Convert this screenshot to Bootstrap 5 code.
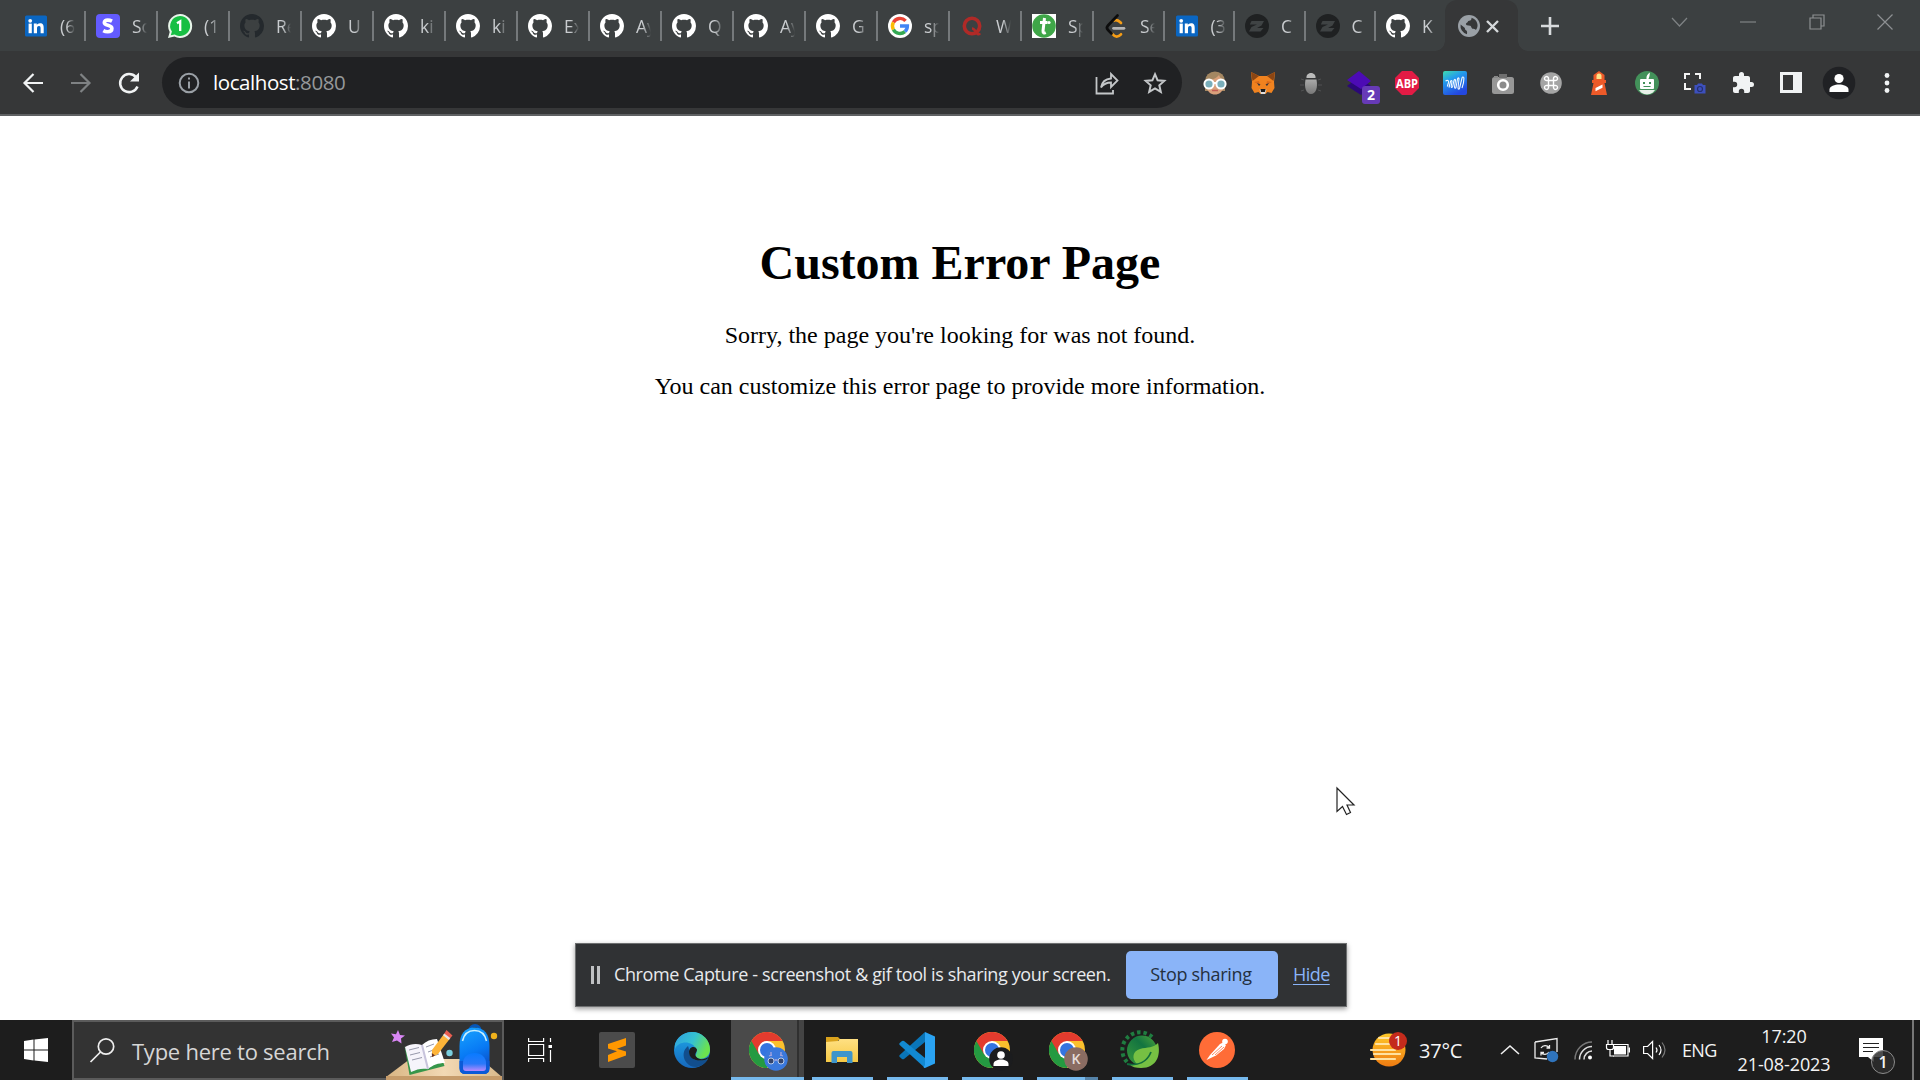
<!DOCTYPE html>
<html lang="en">
<head>
<meta charset="utf-8">
<meta name="viewport" content="width=device-width, initial-scale=1">
<title>Custom Error Page</title>
<link href="https://cdn.jsdelivr.net/npm/bootstrap@5.3.0/dist/css/bootstrap.min.css" rel="stylesheet">
<style>
  body { font-family: "Open Sans", "Noto Sans", sans-serif; background: #fff; }
  svg { display: block; flex: none; overflow: visible; }
  .tabstrip { height: 51px; background: #3c4041; color: #c9cccf; }
  .tab-item { width: 72px; height: 30px; margin-top: 11px; padding-left: 10px; gap: 12px; border-right: 2px solid #75797b; flex: none; }
  .tab-item.first { width: 86px; padding-left: 24px; }
  .tab-item.slim { width: 70.5px; }
  .tab-item.last { border-color: transparent; width: 68.5px; }
  .tab-label { width: 15px; overflow: hidden; white-space: nowrap; font-size: 17.5px; line-height: 26px; margin-top: -1px; -webkit-mask-image: linear-gradient(90deg,#000 45%,transparent); mask-image: linear-gradient(90deg,#000 45%,transparent); }
  .tab-active { width: 73px; height: 51px; background: #363738; border-radius: 12px 12px 0 0; padding-left: 13px; padding-top: 1px; gap: 6px; position: relative; }
  .tab-active::before, .tab-active::after { content: ""; position: absolute; bottom: 0; width: 10px; height: 10px; }
  .tab-active::before { left: -10px; background: radial-gradient(circle at 0 0, transparent 9.5px, #363738 10px); }
  .tab-active::after { right: -10px; background: radial-gradient(circle at 100% 0, transparent 9.5px, #363738 10px); }
  .tab-plus { margin-left: 23px; }
  .window-controls { width: 222px; height: 43px; margin-right: 26.500px; }
  .toolbar { height: 65px; background: #363738; border-bottom: 2px solid #5f6163; padding-left: 21px; }
  .omnibox { width: 1020px; height: 51px; border-radius: 26px; background: #202123; margin-left: 21px; padding: 0 15px 0 16px; }
  .url { font-size: 20.5px; color: #fff; line-height: 28px; margin: -2px 0 0 13px; letter-spacing: -.42px; }
  .url span { color: #95989a; }
  .ext-row { margin-left: 21px; gap: 24px; }
  .ext-count { position: absolute; left: 15px; top: 15px; width: 18px; height: 18px; border-radius: 3px; background: #673ab7; color: #fff; font-size: 14px; font-weight: 700; line-height: 18px; text-align: center; }
  .page { height: 904px; padding-top: 119px; font-family: "Liberation Serif", "Times New Roman", serif; color: #000; }
  .page h1 { font-size: 48px; font-weight: 700; line-height: 55px; margin: 0 0 32px; }
  .page p { font-size: 24px; line-height: 27px; margin: 0 0 24px; }
  .pointer { position: absolute; left: 1336px; top: 787px; }
  .share-bar { position: absolute; left: 575px; top: 943px; width: 772px; height: 64px; background: #303234; border: 1px solid #6d6f70; box-shadow: 0 2px 5px rgba(0,0,0,.4); color: #e8eaed; font-size: 18px; padding: 0 0 1px 15px; white-space: nowrap; }
  .share-bar .bars { width: 9px; height: 18px; border: solid #bfc1c3; border-width: 0 3px; margin-right: 14px; }
  .share-text { width: 497px; margin-right: 15px; letter-spacing: -.38px; }
  .btn-share { width: 152px; height: 48px; background: #8ab4f8; color: #24303f; font-size: 18px; font-weight: 500; letter-spacing: -.3px; border-radius: 5px; padding: 0 2px 0 0; border: 0; }
  .share-hide { color: #8ab4f8; margin-left: 15px; letter-spacing: -.55px; text-underline-offset: 3px; }
  .share-hide:hover { color: #aecbfa; }
  .taskbar { height: 60px; background: #1d1d1d; color: #f4f4f4; }
  .start { width: 72px; padding-left: 24px; }
  .search { width: 432px; height: 60px; background: #333; border: 2px solid #5b5b5b; padding-left: 16px; }
  .search-text { font-size: 22px; color: #d6d6d6; margin: 2px 0 0 17px; width: 256px; letter-spacing: -.25px; white-space: nowrap; }
  .task { width: 61px; height: 60px; border-bottom: 3px solid #76b9ed; padding: 3px 2px 0 0; margin-right: 14px; }
  .task.idle { border-color: transparent; padding-right: 0; margin-right: 0; }
  .task.active { width: 73px; background: linear-gradient(90deg,#4a4a4a 66px,#303030 66px,#303030 68px,#444 68px); margin-right: 8px; }
  .task.split { border-image: linear-gradient(90deg,#76b9ed 47px,#5583a8 47px) 1; border-width: 0 0 3px; border-style: solid; }
  .task-view { width: 72px; }
  .task-sublime { width: 81px; }
  .task.task-edge { width: 69px; margin-right: 5px; }
  .tray { margin-left: auto; width: 549px; font-size: 18px; }
  .temp { width: 82px; margin-left: 12px; font-size: 20px; letter-spacing: -.2px; margin-top: 2px; }
  .clock { width: 120px; font-size: 18px; line-height: 28px; letter-spacing: -.1px; margin-left: 6px; }
  .lang { margin-left: 16px; width: 36px; letter-spacing: -.7px; }
  .note { margin-left: 15px; }
  .note-count { position: absolute; left: 12px; top: 12px; width: 24px; height: 24px; border: 1px solid #8b8b8b; border-radius: 50%; background: rgba(45,45,45,.85); font-size: 16px; line-height: 22px; font-weight: 600; text-align: center; }
  .show-desktop { width: 8px; border-left: 2px solid #777; }
</style>
<script src="https://cdn.jsdelivr.net/npm/bootstrap@5.3.0/dist/js/bootstrap.bundle.min.js"></script>
</head>
<body class="overflow-hidden">
<svg width="0" height="0" class="position-absolute">
  <defs>
    <symbol id="github" viewBox="0 0 16 16"><path d="M8 0C3.58 0 0 3.58 0 8c0 3.54 2.29 6.53 5.47 7.59.4.07.55-.17.55-.38 0-.19-.01-.82-.01-1.49-2.01.37-2.53-.49-2.69-.94-.09-.23-.48-.94-.82-1.13-.28-.15-.68-.52-.01-.53.63-.01 1.08.58 1.23.82.72 1.21 1.87.87 2.33.66.07-.52.28-.87.51-1.07-1.78-.2-3.64-.89-3.64-3.95 0-.87.31-1.59.82-2.15-.08-.2-.36-1.02.08-2.12 0 0 .67-.21 2.2.82.64-.18 1.32-.27 2-.27s1.36.09 2 .27c1.53-1.04 2.2-.82 2.2-.82.44 1.1.16 1.92.08 2.12.51.56.82 1.27.82 2.15 0 3.07-1.87 3.75-3.65 3.95.29.25.54.73.54 1.48 0 1.07-.01 1.93-.01 2.2 0 .21.15.46.55.38A8.01 8.01 0 0 0 16 8c0-4.42-3.58-8-8-8z"/></symbol>
    <symbol id="linkedin" viewBox="0 0 24 24"><rect x="1" y="1.500" width="22" height="21" rx="1.500" fill="#0a66c2"/><g fill="#fff"><circle cx="6.200" cy="6.800" r="1.900"/><rect x="4.600" y="9.600" width="3.200" height="9.600"/><path d="M9.800 9.600h3v1.400c.6-1 1.700-1.700 3.200-1.700 3 0 3.700 1.900 3.700 4.600v5.300h-3.100v-4.800c0-1.300-.1-2.500-1.600-2.500-1.700 0-2 1.200-2 2.500v4.800H9.800z"/></g></symbol>
    <symbol id="zed" viewBox="0 0 24 24"><circle cx="12" cy="12" r="12" fill="#1f2122"/><path d="M6.500 7H19l-2.500 4.500-4.500 2.500h6.500L15.500 17.500H4l2.500-4.500L12 10.500H4.800z" fill="#3f4344"/></symbol>
    <symbol id="chrome" viewBox="0 0 36 36"><circle cx="18" cy="18" r="18" fill="#fbc02d"/><path d="M2.400 9A18 18 0 0 0 18 36l7.800-13.500L18 18z" fill="#249a41"/><path d="M2.400 9A18 18 0 0 1 33.600 9H18l-7.800 13.500z" fill="#e33b2e"/><circle cx="18" cy="18" r="9" fill="#fff"/><circle cx="18" cy="18" r="7" fill="#3474e0"/></symbol>
    <linearGradient id="gEdge" x1="0" y1="0" x2="1" y2=".4"><stop offset="0" stop-color="#2f9fdf"/><stop offset=".55" stop-color="#35c1d2"/><stop offset="1" stop-color="#6be24f"/></linearGradient>
    <linearGradient id="gEdge2" x1="0" y1="0" x2="0" y2="1"><stop offset="0" stop-color="#1ea7e8"/><stop offset="1" stop-color="#1668bd"/></linearGradient>
    <linearGradient id="gWave" x1="0" y1="0" x2=".5" y2="1"><stop offset="0" stop-color="#3fdcae"/><stop offset=".4" stop-color="#239bec"/><stop offset="1" stop-color="#2448e0"/></linearGradient>
    <linearGradient id="gSun" x1="0" y1="0" x2="0" y2="1"><stop offset="0" stop-color="#ffc928"/><stop offset="1" stop-color="#ee7b12"/></linearGradient>
    <linearGradient id="gBug" x1="0" y1="0" x2="0" y2="1"><stop offset="0" stop-color="#aaa"/><stop offset="1" stop-color="#777"/></linearGradient>
    <linearGradient id="gBag" x1="0" y1="0" x2=".3" y2="1"><stop offset="0" stop-color="#18a5ff"/><stop offset=".6" stop-color="#087af5"/><stop offset="1" stop-color="#0b50c8"/></linearGradient>
    <linearGradient id="gPocket" x1="0" y1="0" x2="0" y2="1"><stop offset="0" stop-color="#087bff"/><stop offset=".6" stop-color="#2b79fa"/><stop offset="1" stop-color="#b98aff"/></linearGradient>
    <linearGradient id="gDesk" x1="0" y1="0" x2="1" y2="0"><stop offset="0" stop-color="#d9b583"/><stop offset=".5" stop-color="#f2d9b4"/><stop offset="1" stop-color="#d9b98b"/></linearGradient>
    <linearGradient id="gGear" x1="0" y1="1" x2="1" y2="0"><stop offset="0" stop-color="#3a9a3c"/><stop offset=".6" stop-color="#137440"/><stop offset="1" stop-color="#4fa63a"/></linearGradient>
    <linearGradient id="gFolder" x1="0" y1="0" x2="0" y2="1"><stop offset="0" stop-color="#ffe083"/><stop offset="1" stop-color="#f6c945"/></linearGradient>
  </defs>
</svg>

<div class="d-flex flex-column vh-100">
  <!-- Browser tabs -->
  <header class="tabstrip d-flex flex-shrink-0">
    <div class="tab-item first d-flex align-items-center"><svg width="24" height="24"><use href="#linkedin"/></svg><span class="tab-label">(6</span></div>
    <div class="tab-item d-flex align-items-center"><svg width="24" height="24" viewBox="0 0 24 24"><rect width="24" height="24" rx="4" fill="#635bff"/><path d="M16 7.200c-1.500-.8-3-1.100-4.300-1.100-2.200 0-3.400.9-3.400 2.400 0 3.600 7.600 2 7.600 6 0 2-1.600 3.200-4.200 3.200-1.500 0-3.200-.4-4.400-1.100" fill="none" stroke="#fff" stroke-width="3.600"/></svg><span class="tab-label">So</span></div>
    <div class="tab-item d-flex align-items-center"><svg width="24" height="24" viewBox="0 0 24 24"><path d="M12 0a12 12 0 1 1-5.600 22.500L0 24l1.700-6A12 12 0 0 1 12 0z" fill="#e8f5ea"/><path d="M12 2a10 10 0 1 1-5.300 18.400L2.800 21.300l1.100-3.700A10 10 0 0 1 12 2z" fill="#17bf43"/><path d="M9 9.200l3.200-2V17" fill="none" stroke="#fff" stroke-width="2.300"/></svg><span class="tab-label">(1</span></div>
    <div class="tab-item d-flex align-items-center"><svg width="24" height="24" fill="#24292d"><use href="#github"/></svg><span class="tab-label">Re</span></div>
    <div class="tab-item d-flex align-items-center"><svg width="24" height="24" fill="#fff"><use href="#github"/></svg><span class="tab-label">U</span></div>
    <div class="tab-item d-flex align-items-center"><svg width="24" height="24" fill="#fff"><use href="#github"/></svg><span class="tab-label">ki</span></div>
    <div class="tab-item d-flex align-items-center"><svg width="24" height="24" fill="#fff"><use href="#github"/></svg><span class="tab-label">ki</span></div>
    <div class="tab-item d-flex align-items-center"><svg width="24" height="24" fill="#fff"><use href="#github"/></svg><span class="tab-label">Ex</span></div>
    <div class="tab-item d-flex align-items-center"><svg width="24" height="24" fill="#fff"><use href="#github"/></svg><span class="tab-label">Ay</span></div>
    <div class="tab-item d-flex align-items-center"><svg width="24" height="24" fill="#fff"><use href="#github"/></svg><span class="tab-label">Q</span></div>
    <div class="tab-item d-flex align-items-center"><svg width="24" height="24" fill="#fff"><use href="#github"/></svg><span class="tab-label">Ay</span></div>
    <div class="tab-item d-flex align-items-center"><svg width="24" height="24" fill="#fff"><use href="#github"/></svg><span class="tab-label">G</span></div>
    <div class="tab-item d-flex align-items-center"><svg width="24" height="24" viewBox="0 0 24 24"><circle cx="12" cy="12" r="12" fill="#fff"/><g fill="none" stroke-width="3.400"><path d="M17.600 6.900A7.500 7.500 0 0 0 5.400 8.400" stroke="#ea4335"/><path d="M5.400 8.400a7.500 7.500 0 0 0 0 7.200" stroke="#fbbc05"/><path d="M5.400 15.600a7.500 7.500 0 0 0 11.500 2" stroke="#34a853"/><path d="M16.900 17.600A7.500 7.500 0 0 0 19.400 12H12" stroke="#4285f4"/></g></svg><span class="tab-label">sp</span></div>
    <div class="tab-item d-flex align-items-center"><svg width="24" height="24" viewBox="0 0 24 24"><ellipse cx="12" cy="12" rx="7.700" ry="7.800" fill="none" stroke="#b02a27" stroke-width="3.600"/><path d="M12 14.500c2.500 0 3.500 3 5 5 1 1.200 2.300.7 3-.3" fill="none" stroke="#b02a27" stroke-width="2.600"/></svg><span class="tab-label">W</span></div>
    <div class="tab-item d-flex align-items-center"><svg width="24" height="24" viewBox="0 0 24 24"><path d="M0 0h24v24H0z" fill="#fff"/><circle cx="12" cy="12" r="11.800" fill="#3fa648"/><path d="M12.500 4l-1.500 13c-.2 2 1.200 2.300 2.800 1.600M8 8.600h7.500" fill="none" stroke="#fff" stroke-width="3"/><circle cx="17" cy="8.500" r="1.600" fill="#fff"/></svg><span class="tab-label">Sp</span></div>
    <div class="tab-item slim d-flex align-items-center"><svg width="24" height="24" viewBox="0 0 24 24" fill="none" stroke-width="2.700" stroke-linecap="round"><path d="M10 6.500c2.200-1 4-.4 6 1.500l1 1M8.500 20c2.500 3.200 5.500 3.500 8.500.300" stroke="#f59d16"/><path d="M13.500 1.500L4 11.500c-1.500 1.600-1.500 3 0 4.500l3.500 3.500" stroke="#0c0c0c"/><path d="M9.500 14.300H20" stroke="#b4b4b4"/></svg><span class="tab-label">Se</span></div>
    <div class="tab-item slim d-flex align-items-center"><svg width="24" height="24"><use href="#linkedin"/></svg><span class="tab-label">(3</span></div>
    <div class="tab-item slim d-flex align-items-center"><svg width="24" height="24"><use href="#zed"/></svg><span class="tab-label">C</span></div>
    <div class="tab-item slim d-flex align-items-center"><svg width="24" height="24"><use href="#zed"/></svg><span class="tab-label">C</span></div>
    <div class="tab-item last d-flex align-items-center"><svg width="24" height="24" fill="#fff"><use href="#github"/></svg><span class="tab-label">K</span></div>
    <div class="tab-active d-flex align-items-center">
      <svg width="22" height="22" viewBox="0 0 22 22"><circle cx="11" cy="11" r="11" fill="#9aa0a6"/><path d="M13.500 2.800c.3 2-.8 2.700-2.300 2.900-1.700.2-1.200 1.800-2.700 2.300-1 .4-.5 2 .3 2.300l3.400.4c1.200.4 1 2.400 2.300 3 1 .5 2.600 0 3.400 1.300 1.500-2 1.900-4 1.500-6-.7-3-2.700-5.200-5.900-6.200zM2.600 9.500l4 3.300c.6.700.2 1.900 1.300 2.400 1.300.5 1.500 2 1 4A8.500 8.500 0 0 1 2.600 9.500z" fill="#363738"/></svg>
      <svg width="13" height="13" viewBox="0 0 13 13" stroke="#d5d8da" stroke-width="2.400"><path d="M1 1l11 11M12 1L1 12"/></svg>
    </div>
    <svg class="tab-plus align-self-center" width="18" height="18" viewBox="0 0 18 18" stroke="#d8dbdd" stroke-width="2.600"><path d="M9 0v18M0 9h18"/></svg>
    <div class="window-controls d-flex justify-content-between align-items-center ms-auto">
      <svg width="16" height="10" viewBox="0 0 16 10" fill="none" stroke="#7f8385" stroke-width="1.200"><path d="M0 1l7.500 8L15 1"/></svg>
      <svg width="16" height="2" viewBox="0 0 16 2"><path d="M0 .500h16v1H0z" fill="#8d9092"/></svg>
      <svg width="16" height="16" viewBox="0 0 16 16" fill="none" stroke="#8d9092" stroke-width="1.200"><path d="M1 4h11v11H1zM4 4V1h11v11h-3"/></svg>
      <svg width="16" height="16" viewBox="0 0 16 16" stroke="#8d9092" stroke-width="1.200"><path d="M.5.500l15 15m0-15l-15 15"/></svg>
    </div>
  </header>

  <!-- Address bar and extensions -->
  <nav class="toolbar d-flex align-items-center flex-shrink-0">
    <svg width="24" height="24" viewBox="0 0 24 24" fill="none" stroke="#f1f3f4" stroke-width="2.200"><path d="M22 12H3.500M12.500 3L3.500 12l9 9"/></svg>
    <svg class="ms-4" width="24" height="24" viewBox="0 0 24 24" fill="none" stroke="#7f8284" stroke-width="2.200"><path d="M2 12h18.500M11.500 3l9 9-9 9"/></svg>
    <svg class="ms-4" width="24" height="24" viewBox="0 0 24 24" fill="none" stroke="#f1f3f4" stroke-width="2.500"><path d="M20.500 15.500A9 9 0 1 1 18.800 6"/><path d="M22 1.500v9h-9z" fill="#f1f3f4" stroke="none"/></svg>
    <div class="omnibox d-flex align-items-center">
      <svg width="22" height="22" viewBox="0 0 22 22"><circle cx="11" cy="11" r="9.300" fill="none" stroke="#9aa0a6" stroke-width="2"/><path d="M10 5.500h2v2h-2zM10 9.500h2v7h-2z" fill="#9aa0a6"/></svg>
      <div class="url">localhost<span>:8080</span></div>
      <svg class="ms-auto" width="24" height="24" viewBox="0 0 24 24" fill="none" stroke="#c4c7c9" stroke-width="1.800"><path d="M1.500 6v16.500H18V19M6 16.500C7 10.500 10.500 8 16 7.500V3l6.500 6.500-6.500 6.500v-4.500c-5 0-7.500 1.500-10 5z"/></svg>
      <svg class="ms-4" width="24" height="24" viewBox="0 0 24 24" fill="none" stroke="#c4c7c9" stroke-width="2"><path d="M12 3.200l2.600 6.100 6.700.6-5 4.400 1.500 6.500-5.800-3.500-5.800 3.500 1.500-6.500-5-4.400 6.700-.6z"/></svg>
    </div>
    <div class="ext-row d-flex align-items-center">
      <svg width="24" height="24" viewBox="0 0 24 24"><path d="M2 20V10a10 9.500 0 0 1 20 0v10z" fill="#a48762"/><path d="M4 9c5 0 10-2 12-5 1 3 3 5 5 5v6c-1 6-5 8.500-9 8.500S4 21 3.500 15z" fill="#d9a07b"/><path d="M9 19.500h6" stroke="#c25c55" stroke-width="1.500"/><g fill="#79aebb" stroke="#fff" stroke-width="2"><circle cx="6" cy="13" r="4.600"/><circle cx="18" cy="13" r="4.600"/></g><path d="M10 12h4" stroke="#fff" stroke-width="2"/></svg>
      <svg width="24" height="24" viewBox="0 0 24 24"><path d="M0 1l8 4h8l8-4-1 10 .5 6-3 5-4-1-2 2h-5l-2-2-4 1-3-5 .5-6z" fill="#f0821f"/><path d="M0 1l8 4-6.500 5zM24 1l-8 4 6.500 5z" fill="#8b4513"/><path d="M3 11l5-1 1 4zM21 11l-5-1-1 4z" fill="#d9691a"/><path d="M6 12l3.500 1.500L8 15zM18 12l-3.500 1.500L16 15z" fill="#30343a"/><path d="M8.500 18.500h7L14 23h-4z" fill="#ddd"/><path d="M9.500 18h5l-.5 3h-4z" fill="#1c1c1c"/></svg>
      <svg width="24" height="24" viewBox="0 0 24 24"><path d="M7.500 7c-.5-2.500 1.500-5 4.500-5s5 2.500 4.500 5z" fill="#bbb"/><path d="M6.500 8.500h11c1.500 8-.5 14.500-5.500 14.500S5 16.500 6.500 8.500z" fill="url(#gBug)"/><path d="M2 8l3 1M1 14h4M2 20l3-1M22 8l-3 1M23 14h-4M22 20l-3-1" stroke="#505152" stroke-width="1"/></svg>
      <div class="position-relative"><svg width="24" height="24" viewBox="0 0 24 24"><path d="M0 15l12-9 12 9-10 9z" fill="#2b0878"/><path d="M12 0l12 10-10 8L0 9z" fill="#4c0bb5"/></svg><span class="ext-count">2</span></div>
      <svg width="24" height="24" viewBox="0 0 24 24"><path d="M7 0h10l7 7v10l-7 7H7l-7-7V7z" fill="#e31b45"/><text x="12" y="16.500" font-size="12.500" font-weight="700" fill="#fff" text-anchor="middle" textLength="22" lengthAdjust="spacingAndGlyphs">ABP</text></svg>
      <svg width="24" height="24" viewBox="0 0 24 24"><rect width="24" height="24" rx="2" fill="url(#gWave)"/><path d="M2.500 10c2-1.200 3.500-.5 3 1.500l-1.200 4M6 16.500l1.500-6c.4-1.300 1.700-1.300 1.500 0l-.8 5c0 1.300 1.200 1.300 1.500 0l1.300-6c.4-1.500 1.600-1.500 1.500 0l-1 6.500c0 1.500 1.200 1.500 1.600 0l1.400-8c.4-1.500 1.700-1.500 1.500 0l-1 9c0 1.500 1.200 1.500 1.600 0L19 7c.4-1.500 2-1.200 1.900.5 0 4-.5 6-1.900 9.500" fill="none" stroke="#f0f8ff" stroke-width="1.100"/></svg>
      <svg width="24" height="24" viewBox="0 0 24 24"><rect x="1" y="6" width="22" height="17" rx="2.500" fill="#979797"/><path d="M8 3h8v4H8z" fill="#6f6f6f"/><path d="M3 5h4v2H3z" fill="#888"/><circle cx="12" cy="14" r="4.800" fill="#8b8b8b" stroke="#fff" stroke-width="2.600"/></svg>
      <svg width="24" height="24" viewBox="0 0 24 24"><circle cx="12" cy="12" r="10.800" fill="#a5a5a5"/><path d="M9.500 9.500h5v5h-5zM9.500 9.500H8A2 2 0 1 1 9.500 7.500zM14.500 9.500V7.500a2 2 0 1 1 1.500 2zM14.500 14.500H16a2 2 0 1 1-1.500 2zM9.500 14.500v2a2 2 0 1 1-1.500-2z" fill="none" stroke="#fff" stroke-width="1.400"/></svg>
      <svg width="24" height="24" viewBox="0 0 24 24"><path d="M12 0l5.500 4v5H19v3h-1.500L20 24H4l2.500-12H5V9h1.500V4z" fill="#ed5a29"/><path d="M9.500 8V5a2.500 2.500 0 0 1 5 0v3z" fill="#fce38a"/><path d="M8.500 17l7-3.500v3.300l-7 3.500z" fill="#fff"/></svg>
      <svg width="24" height="24" viewBox="0 0 24 24"><circle cx="12" cy="12" r="12" fill="#43915a"/><path d="M11.500 8c-.5-3 1-5 3.500-6.500-.5 2 0 3-1.500 6.500" fill="#fff"/><rect x="5" y="8" width="14" height="10" rx="1" fill="#fff"/><path d="M8 11h2v2H8zM14 11h2v2h-2zM8.500 15h7v1h-7z" fill="#43915a"/><path d="M4 19h16l-2 2.500c-4 2.500-8 2.500-12 0z" fill="#e8f0e9"/></svg>
      <svg width="24" height="24" viewBox="0 0 24 24"><path d="M7 3H2v5M2 12v6h6M12 3h5v5" fill="none" stroke="#f3f3f3" stroke-width="2"/><path d="M11.500 14h2.500l1-1.500h4l1 1.500h2.500v8.500h-11z" fill="#3d50bd"/><circle cx="17" cy="18" r="2.500" fill="none" stroke="#25306f" stroke-width="1.200"/></svg>
      <svg width="24" height="24" viewBox="0 0 24 24"><path d="M20.500 11H19V7c0-1.100-.9-2-2-2h-4V3.500a2.500 2.500 0 0 0-5 0V5H4c-1.100 0-2 .9-2 2v3.800h1.500a2.700 2.700 0 0 1 0 5.400H2V20c0 1.100.9 2 2 2h3.800v-1.500a2.700 2.700 0 0 1 5.400 0V22H17c1.100 0 2-.9 2-2v-4h1.500a2.500 2.500 0 0 0 0-5z" fill="#f1f3f4"/></svg>
      <svg width="24" height="24" viewBox="0 0 24 24"><path d="M1 1h22v21H1zM4 4v15h10V4z" fill="#f1f3f4" fill-rule="evenodd"/></svg>
      <svg width="24" height="24" viewBox="0 0 24 24"><circle cx="12" cy="12" r="16.300" fill="#202124"/><circle cx="12" cy="7.500" r="4.600" fill="#fff"/><path d="M2.500 21v-2.500C2.500 15 8 13.500 12 13.500s9.500 1.500 9.500 5V21z" fill="#fff"/></svg>
      <svg width="24" height="24" viewBox="0 0 24 24" fill="#f1f3f4"><circle cx="12" cy="4.500" r="2.400"/><circle cx="12" cy="12" r="2.400"/><circle cx="12" cy="19.500" r="2.400"/></svg>
    </div>
  </nav>

  <!-- Served page -->
  <main class="page text-center flex-shrink-0">
    <h1>Custom Error Page</h1>
    <p>Sorry, the page you're looking for was not found.</p>
    <p>You can customize this error page to provide more information.</p>
  </main>

  <!-- Windows taskbar -->
  <footer class="taskbar d-flex flex-shrink-0">
    <div class="start d-flex align-items-center"><svg width="24" height="24" viewBox="0 0 24 24" fill="#fff"><path d="M0 3l9.500-1.500v10H0zM10.500 1.400L24 0v11.500H10.500zM0 12.500h9.500v10L0 21zM10.500 12.500H24V24l-13.500-1.600z"/></svg></div>
    <div class="search d-flex align-items-center">
      <svg width="25" height="25" viewBox="0 0 25 25" fill="none" stroke="#eee" stroke-width="1.700"><circle cx="16" cy="8.500" r="7.700"/><path d="M10.500 14L.5 24"/></svg>
      <span class="search-text">Type here to search</span>
      <svg width="116" height="60" viewBox="0 0 116 60">
        <path d="M0 57L24 39h71l21 18z" fill="url(#gDesk)"/><path d="M0 56h116v4H0z" fill="#c69c6b"/>
        <g transform="translate(1 1)">
        <path d="M11 9l2 5 5 .5-4 3 .5 5-4.500-3L5 21l2-4.500-3-4 5 .8z" fill="#d987f5"/>
        <path d="M17.500 25l5 29 35-9-2-6-30 6z" fill="#36964a"/>
        <path d="M18 26c5-3 11-4 17-2l6 24c-6-1-11 0-17 3z" fill="#f6f4fb"/><path d="M35 24c4-4 9-6 15-6l8 24c-7 0-12 2-17 6z" fill="#fff"/><path d="M35 24l6 24" stroke="#c8c4dc" stroke-width="2"/><path d="M22 29l10-2.500M23 34l10-2.500M25 39l10-2.500M39 26l8-3M41 31l8-3M43 36l9-3" stroke="#9698aa" stroke-width="1"/>
        <path d="M45 29L57 13l6 4.500L51 33l-6 3z" fill="#fdb438"/><path d="M57 13l2.500-4 6 5.500-2.500 3z" fill="#e95e50"/><path d="M56 14.300l1.300-1.800 6 4.500-1.500 2z" fill="#e8e4e4"/><path d="M45 36l-.2-4 3.200 2.600z" fill="#6a3220"/>
        <circle cx="62.500" cy="32" r="3.200" fill="#79cede"/><circle cx="107" cy="15" r="3.200" fill="#efb11c"/>
        <path d="M83 9a5 4.500 0 0 1 10 0" fill="none" stroke="#0756b7" stroke-width="3"/><path d="M72.500 25C72.500 13 78 6.500 87.500 6.500s15 6.500 15 18.500v22q0 6-6 6h-18q-6 0-6-6z" fill="url(#gBag)"/><path d="M72.500 40h30v7q0 6-6 6h-18q-6 0-6-6z" fill="#0b5ad8"/>
        <path d="M75.500 20c1.500-6.500 6-10.500 12-10.500s10.500 4 12 10.500" fill="none" stroke="#c8f0ff" stroke-width="1.600"/><path d="M76 47v-5c0-6 5-10 11.500-10S99 36 99 42v5q0 3-3 3H79q-3 0-3-3z" fill="url(#gPocket)"/>
        </g>
      </svg>
    </div>
    <div class="task idle task-view d-flex align-items-center justify-content-center"><svg width="24" height="24" viewBox="0 0 24 24" fill="none" stroke="#fff" stroke-width="1.200"><path d="M.6 0v3.500h15V0M.6 6.500h15v11H.6zM.6 24v-3.500h15V24M22.500 0v4M22.500 12v12"/><path d="M20.500 7h3.500v3h-3.500z" fill="#fff" stroke="none"/></svg></div>
    <div class="task idle task-sublime d-flex align-items-center justify-content-center"><svg width="36" height="36" viewBox="0 0 36 36"><rect width="36" height="36" rx="2" fill="#4b4b4b"/><path d="M9 12L27 6v7.500l-9 3.300 9 2.700v4L9 30v-7l9-3.800-9-2.700z" fill="#ff9800"/></svg></div>
    <div class="task idle task-edge d-flex align-items-center justify-content-center"><svg width="36" height="36" viewBox="0 0 36 36"><circle cx="18" cy="18" r="18" fill="url(#gEdge2)"/><path d="M1 12A18 18 0 0 1 36 18c0 8-10 11-14 7-2-1.500 2-2.500 0-8C19 9 5 8 1 17z" fill="url(#gEdge)"/><path d="M14 14c-9 7-3 21 8 21 5 0 10-4 12-8-8 4-18 1-19-7 0-2 0-4-1-6z" fill="#124e8d"/><path d="M15 20c0-5 6-7 8-2.500 0 3-3 4-1 7 3 3.500 8 3.500 13 0-1 2-2 3-4 3.500-8 2-16-1-16-8z" fill="#1d1d1d"/></svg></div>
    <div class="task active d-flex align-items-center justify-content-center"><svg width="36" height="36" viewBox="0 0 36 36"><use href="#chrome" width="36" height="36"/><circle cx="27" cy="27" r="11.800" fill="#3a78dc"/><g fill="#35456d" stroke="#b8cceb" stroke-width="1"><circle cx="22" cy="29" r="3"/><circle cx="32" cy="29" r="3"/></g><path d="M22 20v4M32 20v4M20 24l3-1M34 24l-3-1M25.500 28h3" stroke="#a9a6dc" stroke-width="1.300"/></svg></div>
    <div class="task d-flex align-items-center justify-content-center"><svg width="36" height="36" viewBox="0 0 36 36"><path d="M2 5h12l3 3h-3v4H2z" fill="#d9a21c"/><path d="M2 10l12-1 2-2h18v23H2z" fill="url(#gFolder)"/><path d="M7.500 31V21q0-2 2-2h17q2 0 2 2v10H23v-6H13v6z" fill="#3e95cb"/></svg></div>
    <div class="task d-flex align-items-center justify-content-center"><svg width="36" height="36" viewBox="0 0 36 36"><path d="M26 0v10L5 27q-1 .700-2 0l-2.300-2q-1-1 0-2z" fill="#0a75b8"/><path d="M26 36V26L5 9q-1-.700-2 0l-2.300 2q-1 1 0 2z" fill="#1289d1"/><path d="M26 0l10 4.500v27L26 36q-1 0-1.500-1L26 33z" fill="#2aa3f2"/></svg></div>
    <div class="task d-flex align-items-center justify-content-center"><svg width="36" height="36" viewBox="0 0 36 36"><use href="#chrome" width="36" height="36"/><circle cx="27" cy="27" r="11.800" fill="#1b1c1e"/><circle cx="27" cy="23" r="3.800" fill="#fff"/><path d="M19.500 34v-2c0-3 4-4.500 7.500-4.500s7.500 1.500 7.500 4.500v2z" fill="#fff"/></svg></div>
    <div class="task split d-flex align-items-center justify-content-center"><svg width="36" height="36" viewBox="0 0 36 36"><use href="#chrome" width="36" height="36"/><circle cx="27" cy="27" r="11.800" fill="#8a6c62"/><text x="27" y="32" font-size="14" font-weight="600" fill="#e6dcd9" text-anchor="middle">K</text></svg></div>
    <div class="task d-flex align-items-center justify-content-center"><svg width="36" height="36" viewBox="0 0 36 36"><path d="M3 30A16 16 0 0 1 29 6" fill="none" stroke="#1f7d40" stroke-width="4" stroke-dasharray="3.400 2.900"/><circle cx="18" cy="18.500" r="15" fill="url(#gGear)"/><path d="M34 11c3 12-1 25-17 25-5 0-9-1-12-4 3 1 6 1 8 0-6-6-4-13 3-15 7-2 14-1 18-6z" fill="#76c043"/><path d="M3 32c11 2 20-2 24-12" stroke="#126e3c" stroke-width="1.800" fill="none"/></svg></div>
    <div class="task d-flex align-items-center justify-content-center"><svg width="36" height="36" viewBox="0 0 36 36"><circle cx="18" cy="18" r="18" fill="#ff6c37"/><circle cx="26" cy="9.500" r="2.800" fill="#fff"/><path d="M7.500 28l3.500-5 10-11 3-1.500 3 2.500-2 4-8 6.500z" fill="#fff"/><path d="M13 23l10-9M16 23l9-8" stroke="#ff6c37" stroke-width=".8"/></svg></div>

    <div class="tray d-flex align-items-center">
      <svg width="36" height="36" viewBox="0 0 36 36"><circle cx="18" cy="18" r="16.500" fill="url(#gSun)"/><path d="M8 6h10M5 12h16M0 18h24M3 22h26M0 27h24" stroke="#ffe2a0" stroke-width="2.200" stroke-linecap="round"/><circle cx="27" cy="9" r="9" fill="#c42b1c"/><text x="27" y="14" font-size="14" fill="#fff" text-anchor="middle">1</text></svg>
      <span class="temp text-nowrap">37°C</span>
      <svg width="18" height="10" viewBox="0 0 18 10" fill="none" stroke="#eee" stroke-width="1.600"><path d="M0 9l9-8 9 8"/></svg>
      <svg style="margin-left:15px" width="25" height="24" viewBox="0 0 25 24" fill="none" stroke="#eee" stroke-width="1.300"><path d="M1 4l22-3.500V14M13 21L1 20V4"/><path d="M7 10c2-3 6-3 8-.5M15.500 7v3H12.500M15 14c-2 3-6 3-8 .5M7 17.500v-3h3"/><circle cx="18.500" cy="18.500" r="5.700" fill="#2f74bd" stroke="none"/></svg>
      <svg style="margin-left:15px" width="18" height="20" viewBox="0 0 18 20" fill="none" stroke-width="1.500"><path d="M1 19.500C1 9.500 9 2 18 2" stroke="#777"/><path d="M5.500 19.500C5.500 12 11.500 6.500 18 6.500M10 19.500C10 14.500 14 11 18 11" stroke="#ddd"/><circle cx="16" cy="17.500" r="2" fill="#fff"/></svg>
      <svg style="margin-left:14px" width="25" height="20" viewBox="0 0 25 20"><path d="M5.500 4.500H22V16H7" fill="none" stroke="#fff" stroke-width="1.200"/><path d="M8 6h12v8.500H8zM22.500 7.500H24v5h-1.500z" fill="#fff"/><path d="M2 0v4M6 0v4M.5 4.500h7v3q0 2-2 2h-3q-2 0-2-2zM4 10v6h4" stroke="#fff" stroke-width="1.200" fill="#1d1d1d"/></svg>
      <svg style="margin-left:12px" width="23" height="20" viewBox="0 0 23 20" fill="none" stroke="#fff" stroke-width="1.200"><path d="M.6 6.500h4l5-5v17l-5-5h-4z"/><path d="M13 7.500q2 2.500 0 5M16 5q4 5 0 10"/><path d="M19 2.500q6 7.500 0 15" stroke="#777"/></svg>
      <span class="lang">ENG</span>
      <div class="clock text-center">17:20<br>21-08-2023</div>
      <div class="note position-relative"><svg width="24" height="24" viewBox="0 0 24 24"><path d="M0 0h24v19h-9v5l-6-5H0z" fill="#fff"/><path d="M4 5.500h16M4 9.500h16M4 13.500h10" stroke="#222" stroke-width="1.200"/></svg><span class="note-count">1</span></div>
      <div class="show-desktop ms-auto h-100"></div>
    </div>
  </footer>
</div>

<!-- Screen sharing notice floating over the page -->
<div class="share-bar d-flex align-items-center">
  <div class="bars"></div>
  <span class="share-text">Chrome Capture - screenshot &amp; gif tool is sharing your screen.</span>
  <button class="btn btn-share" type="button">Stop sharing</button>
  <a class="share-hide" href="#">Hide</a>
</div>
<svg class="pointer" width="20" height="29" viewBox="0 0 20 29"><path d="M1 1v23.500l5.500-5 4 8 4-2-3.500-7.500H18z" fill="#fff" stroke="#222" stroke-width="1.200"/></svg>
</body>
</html>
